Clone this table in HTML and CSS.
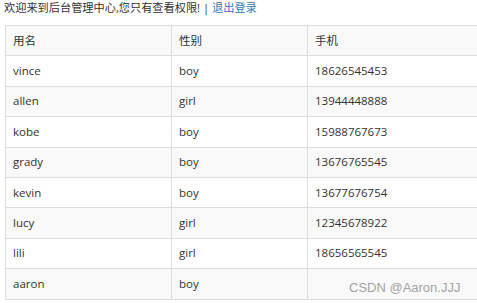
FILE: index.html
```html
<!DOCTYPE html>
<html lang="zh">
<head>
<meta charset="utf-8">
<title>后台管理中心</title>
<link rel="stylesheet" href="styles.css">
</head>
<body>
<div class="page">
  <p class="welcome">欢迎来到后台管理中心,您只有查看权限! <span class="sep">|</span> <a href="#" class="logout">退出登录</a></p>
  <div class="table-wrap">
    <table class="grid">
      <colgroup><col class="c1"><col class="c2"><col class="c3"></colgroup>
      <tbody>
        <tr><td>用名</td><td>性别</td><td>手机</td></tr>
        <tr><td>vince</td><td>boy</td><td>18626545453</td></tr>
        <tr><td>allen</td><td>girl</td><td>13944448888</td></tr>
        <tr><td>kobe</td><td>boy</td><td>15988767673</td></tr>
        <tr><td>grady</td><td>boy</td><td>13676765545</td></tr>
        <tr><td>kevin</td><td>boy</td><td>13677676754</td></tr>
        <tr><td>lucy</td><td>girl</td><td>12345678922</td></tr>
        <tr><td>lili</td><td>girl</td><td>18656565545</td></tr>
        <tr><td>aaron</td><td>boy</td><td></td></tr>
      </tbody>
    </table>
  </div>
</div>
<div class="watermark">CSDN @Aaron.JJJ</div>
</body>
</html>
```

FILE: styles.css
```css
html, body {
  margin: 0;
  padding: 0;
  background: #fff;
}
body {
  font-family: "Open Sans", "Noto Sans CJK SC", sans-serif;
  font-size: 11.5px;
  color: #333;
  overflow: hidden;
}
.page {
  padding: 0 0 0 4px;
}
.welcome {
  margin: 0;
  height: 25px;
  line-height: 16px;
  font-size: 11.2px;
  white-space: nowrap;
}
.logout {
  color: #337ab7;
  text-decoration: none;
}
.table-wrap {
  overflow: hidden;
}
.grid {
  border-collapse: collapse;
  table-layout: fixed;
  width: 520px;
  margin-left: 1px;
}
.c1 { width: 166px; }
.c2 { width: 136px; }
.c3 { width: 218px; }
.grid td {
  border: 1px solid #ddd;
  padding: 6.5px 7px;
  line-height: 16.4px;
  white-space: nowrap;
}
.grid tr:nth-child(odd) td {
  background: #f9f9f9;
}
.watermark {
  position: absolute;
  left: 349px;
  top: 280px;
  font-family: "Liberation Sans", Arial, sans-serif;
  font-size: 13px;
  color: #a3a3a3;
}
```
